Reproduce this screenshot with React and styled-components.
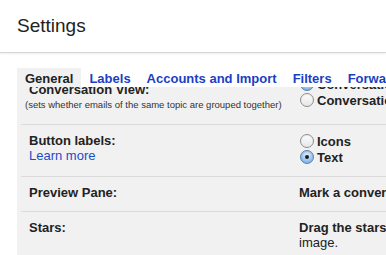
import styled, { createGlobalStyle } from "styled-components";

const GlobalStyle = createGlobalStyle`
  html, body {
    margin: 0;
    padding: 0;
    background: #fff;
    overflow: hidden;
  }
  body {
    font-family: "Liberation Sans", Arial, sans-serif;
    color: #222;
  }
`;

const tabs = ["General", "Labels", "Accounts and Import", "Filters", "Forwarding and POP/IMAP", "Chat"];

const rows = [
  {
    label: "Conversation View:",
    note: "(sets whether emails of the same topic are grouped together)",
    top: 14,
    options: [
      { text: "Conversation view on", checked: true },
      { text: "Conversation view off" },
    ],
  },
  {
    label: "Button labels:",
    link: "Learn more",
    options: [{ text: "Icons" }, { text: "Text", checked: true }],
  },
  {
    label: "Preview Pane:",
    lines: ["Mark a conversation as read: Immediately"],
  },
  {
    label: "Stars:",
    lines: [
      "Drag the stars between the lists. The stars will rotate in the order shown below when you click successively. To learn the name of a star for search, hover your mouse over the",
      "image.",
    ],
  },
];

function Radio({ checked }) {
  return <RadioDot $checked={checked}>{checked && <Pip />}</RadioDot>;
}

function App() {
  return (
    <>
      <GlobalStyle />
      <Header>
        <Title>Settings</Title>
      </Header>
      <Panel>
        <TabBar>
          {tabs.map((t, i) => (
            <Tab key={t} $active={i === 0}>
              {t}
            </Tab>
          ))}
        </TabBar>
        <Viewport>
          <Table>
            {rows.map((r) => (
              <Row key={r.label}>
                <LabelCell $top={r.top}>
                  <Label>{r.label}</Label>
                  {r.note && <Note>{r.note}</Note>}
                  {r.link && <Link href="#">{r.link}</Link>}
                </LabelCell>
                <OptionCell>
                  {r.options &&
                    r.options.map((o) => (
                      <Option key={o.text}>
                        <Radio checked={o.checked} />
                        {o.text}
                      </Option>
                    ))}
                  {r.lines &&
                    r.lines.map((l, i) => (
                      <Line key={i} $bold={i === 0}>
                        {l}
                      </Line>
                    ))}
                </OptionCell>
              </Row>
            ))}
          </Table>
        </Viewport>
      </Panel>
    </>
  );
}

const Header = styled.div`
  height: 53px;
  padding: 15px 0 0 17px;
  box-sizing: border-box;
  border-bottom: 1px solid #d6d6d6;
  box-shadow: 0 1px 2px rgba(0, 0, 0, 0.07);
`;

const Title = styled.h1`
  margin: 0;
  font-size: 19px;
  line-height: 22px;
  font-weight: normal;
  color: #222;
`;

const Panel = styled.div`
  margin: 15px 0 0 17px;
  width: 1000px;
`;

const TabBar = styled.div`
  display: flex;
  height: 19px;
`;

const Tab = styled.div`
  padding: 3px 8px 0;
  font-size: 13px;
  line-height: 16px;
  font-weight: bold;
  white-space: nowrap;
  color: ${(p) => (p.$active ? "#222" : "#1b3fc2")};
  background: ${(p) => (p.$active ? "#f1f1f1" : "transparent")};
`;

const Viewport = styled.div`
  background: #f1f1f1;
  height: 200px;
  overflow: hidden;
  padding-left: 4px;
`;

const Table = styled.div`
  margin-top: -19px;
`;

const Row = styled.div`
  display: grid;
  grid-template-columns: 278px 1fr;
  align-items: start;
  border-bottom: 1px solid #dadada;
`;

const LabelCell = styled.div`
  display: flex;
  flex-direction: column;
  align-items: flex-start;
  padding: ${(p) => p.$top || 8}px 8px 11px;
  font-size: 13px;
  line-height: 15px;
`;

const Label = styled.span`
  font-weight: bold;
`;

const Note = styled.span`
  margin: 1px 0 2px -4px;
  font-size: 9.5px;
  line-height: 13px;
  color: #333;
  white-space: nowrap;
`;

const Link = styled.a`
  color: #1e4bc8;
  text-decoration: none;
`;

const OptionCell = styled.div`
  padding: 8px 0 11px;
  font-size: 13px;
  line-height: 15px;
  white-space: nowrap;
`;

const Option = styled.div`
  display: flex;
  align-items: center;
  gap: 3px;
  height: 16px;
  font-weight: bold;
`;

const RadioDot = styled.span`
  display: inline-flex;
  align-items: center;
  justify-content: center;
  width: 12px;
  height: 12px;
  margin-left: 1px;
  border-radius: 50%;
  border: 1px solid ${(p) => (p.$checked ? "#5f7fa8" : "#8e8e8e")};
  background: ${(p) =>
    p.$checked
      ? "radial-gradient(circle at 50% 35%, #e4f0fc 0%, #a9cdf2 45%, #5b9de4 100%)"
      : "linear-gradient(#fdfdfd, #e6e6e6)"};
  box-shadow: inset 0 1px 1px rgba(0, 0, 0, 0.08);
`;

const Pip = styled.span`
  width: 4px;
  height: 4px;
  border-radius: 50%;
  background: #1a1a1a;
`;

const Line = styled.div`
  font-weight: ${(p) => (p.$bold ? "bold" : "normal")};
`;

export default App;
